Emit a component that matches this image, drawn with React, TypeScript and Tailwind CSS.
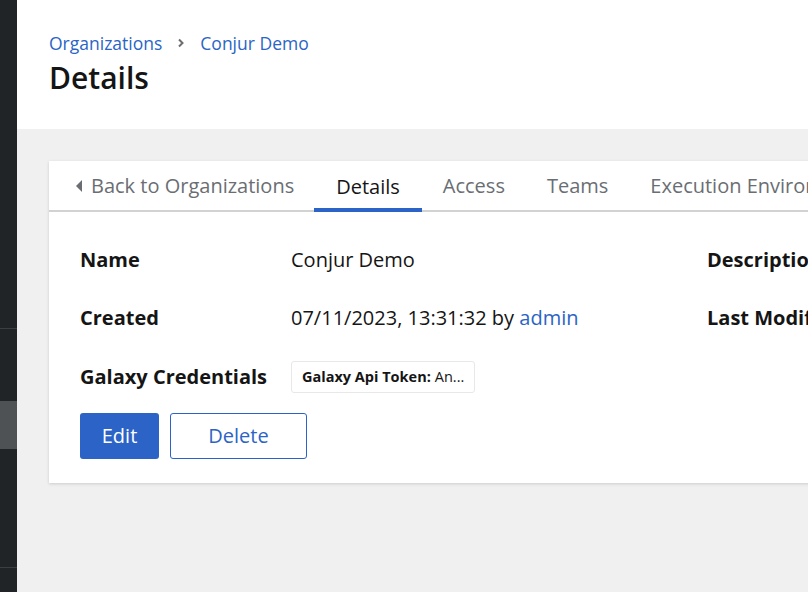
import React from "react";

const font = { fontFamily: '"Open Sans", "Liberation Sans", sans-serif' };

const tabs = ["Details", "Access", "Teams", "Execution Environments", "Job Templates"];

const Sidebar = () => (
  <aside className="flex w-[17px] shrink-0 flex-col bg-[#212427]">
    <div className="h-[329px] border-b border-[#3c3f42]" />
    <div className="h-[72px]" />
    <div className="h-[48px] bg-[#4f5255]" />
    <div className="h-[119px] border-b border-[#3c3f42]" />
    <div className="flex-1" />
  </aside>
);

const Header = () => (
  <header className="flex h-[129px] shrink-0 flex-col bg-white pl-[32px] pt-[30px]">
    <nav className="flex items-center text-[17.5px] leading-[26px] text-[#2b64c6]">
      <span>Organizations</span>
      <svg className="mx-[14px] h-[10px] w-[10px] text-[#6a6e73]" viewBox="0 0 10 10" fill="none">
        <path d="M3 1.5 6.5 5 3 8.5" stroke="currentColor" strokeWidth="2" />
      </svg>
      <span>Conjur Demo</span>
    </nav>
    <h1 className="mt-[2px] text-[30px] font-semibold leading-[40px] text-[#151515]">Details</h1>
  </header>
);

const Tabs = () => (
  <div className="flex h-[51px] border-b-2 border-[#d2d2d2] pl-[7px] pt-[1px] text-[20px] text-[#6a6e73]">
    <div className="flex shrink-0 items-center whitespace-nowrap px-[20px]">
      <svg className="mr-[8px] h-[12px] w-[7px]" viewBox="0 0 7 12" fill="currentColor">
        <path d="M6 0 0 6l6 6z" />
      </svg>
      <span>Back to Organizations</span>
    </div>
    {tabs.map((t) => (
      <div
        key={t}
        className={
          t === "Details"
            ? "relative -mb-[2px] flex shrink-0 items-center whitespace-nowrap border-b-[4px] border-[#2b64c6] px-[22px] pt-[4px] text-[#151515]"
            : "flex shrink-0 items-center whitespace-nowrap px-[21px]"
        }
      >
        {t}
      </div>
    ))}
  </div>
);

const Label = ({ children }: { children: React.ReactNode }) => (
  <dt className="whitespace-nowrap text-[20px] font-bold leading-[30px] text-[#151515]">{children}</dt>
);

const Value = ({ children }: { children?: React.ReactNode }) => (
  <dd className="whitespace-nowrap text-[20px] leading-[30px] text-[#151515]">{children}</dd>
);

const DetailList = () => (
  <dl className="grid grid-cols-[211px_416px_211px_1fr] items-center gap-y-[28px]">
    <Label>Name</Label>
    <Value>Conjur Demo</Value>
    <Label>Description</Label>
    <Value />

    <Label>Created</Label>
    <Value>
      07/11/2023, 13:31:32 by <span className="text-[#2b64c6]">admin</span>
    </Value>
    <Label>Last Modified</Label>
    <Value>07/11/2023, 13:31:32 by admin</Value>

    <Label>Galaxy Credentials</Label>
    <dd className="flex">
      <span className="flex h-[32px] items-center whitespace-nowrap rounded-[3px] border border-[#e8e8e8] px-[10px] text-[14.5px] text-[#151515]">
        <b className="mr-[4px] font-bold">Galaxy Api Token:</b>
        An...
      </span>
    </dd>
  </dl>
);

export default function App() {
  return (
    <div className="flex h-[592px] w-[808px] overflow-hidden bg-[#f0f0f0]" style={font}>
      <Sidebar />
      <main className="flex min-w-0 flex-1 flex-col">
        <Header />
        <section className="flex-1 pl-[32px] pt-[32px]">
          <div className="w-[1100px] bg-white shadow-[0_1px_3px_rgba(0,0,0,0.15)]">
            <Tabs />
            <div className="px-[31px] pb-[24px] pt-[33px]">
              <DetailList />
              <div className="mt-[20px] flex gap-[11px] text-[20px]">
                <button className="h-[46px] w-[79px] rounded-[3px] bg-[#2b64c6] text-white">Edit</button>
                <button className="h-[46px] w-[137px] rounded-[3px] border border-[#2b64c6] text-[#2b64c6]">
                  Delete
                </button>
              </div>
            </div>
          </div>
        </section>
      </main>
    </div>
  );
}
